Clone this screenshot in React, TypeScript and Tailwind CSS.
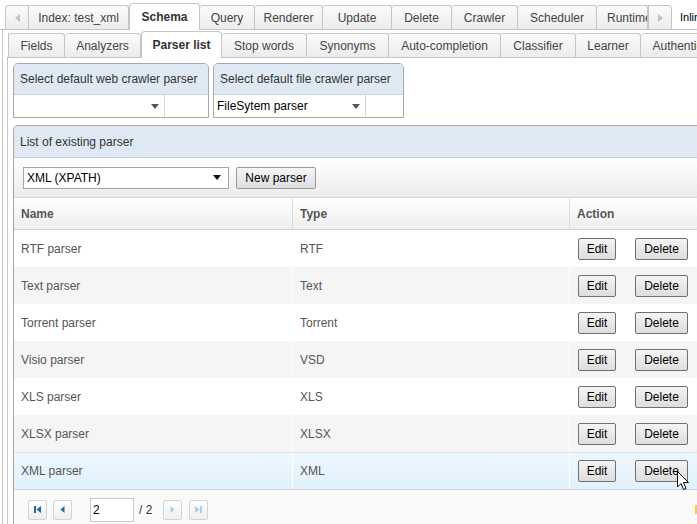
import React from "react";

const topTabs = [
  { label: "Index: test_xml", w: "w-[100px]" },
  { label: "Schema", w: "w-[71px]", active: true },
  { label: "Query", w: "w-[55px]" },
  { label: "Renderer", w: "w-[68px]" },
  { label: "Update", w: "w-[69px]" },
  { label: "Delete", w: "w-[60px]" },
  { label: "Crawler", w: "w-[66px]" },
  { label: "Scheduler", w: "w-[79px]" },
  { label: "Runtime", w: "w-[51px]", clip: true },
];

const subTabs = [
  { label: "Fields", w: "w-[56px]" },
  { label: "Analyzers", w: "w-[76px]" },
  { label: "Parser list", w: "w-[81px]", active: true },
  { label: "Stop words", w: "w-[85px]" },
  { label: "Synonyms", w: "w-[82px]" },
  { label: "Auto-completion", w: "w-[112px]" },
  { label: "Classifier", w: "w-[75px]" },
  { label: "Learner", w: "w-[65px]" },
  { label: "Authentication", w: "w-[100px]" },
];

const parsers = [
  { name: "RTF parser", type: "RTF" },
  { name: "Text parser", type: "Text" },
  { name: "Torrent parser", type: "Torrent" },
  { name: "Visio parser", type: "VSD" },
  { name: "XLS parser", type: "XLS" },
  { name: "XLSX parser", type: "XLSX" },
  { name: "XML parser", type: "XML" },
];

const Caret = ({ color = "#555" }: { color?: string }) => (
  <svg width="8" height="5" viewBox="0 0 8 5">
    <path d="M0 0 L8 0 L4 5 Z" fill={color} />
  </svg>
);

const Tab = ({
  label,
  w,
  active,
  clip,
}: {
  label: string;
  w: string;
  active?: boolean;
  clip?: boolean;
}) =>
  active ? (
    <div
      className={`${w} shrink-0 h-[27px] -mb-px flex items-center justify-center border border-b-0 border-[#c5c5c5] rounded-t-[4px] bg-white font-bold text-[#333] whitespace-nowrap overflow-hidden`}
    >
      {label}
    </div>
  ) : (
    <div
      className={`${w} shrink-0 h-[24px] flex items-center ${clip ? "justify-start pl-[10px]" : "justify-center"} border border-b-0 border-l-0 border-[#c5c5c5] rounded-t-[3px] bg-linear-to-b from-[#fbfbfb] to-[#ececec] text-[#444] whitespace-nowrap overflow-hidden`}
    >
      {label}
    </div>
  );

const WinButton = ({ children, w }: { children: React.ReactNode; w: string }) => (
  <div
    className={`${w} h-[22px] flex items-center justify-center border border-[#707070] rounded-[2px] bg-linear-to-b from-[#f4f4f4] to-[#dddddd] text-black`}
  >
    {children}
  </div>
);

const PagerButton = ({ kind, disabled }: { kind: "first" | "prev" | "next" | "last"; disabled?: boolean }) => {
  const c = disabled ? "#a9d0ea" : "#1a6aa3";
  return (
    <div className="w-[19px] h-[20px] flex items-center justify-center border border-[#d4d4d4] rounded-[2px] bg-linear-to-b from-white to-[#eeeeee]">
      <svg width="9" height="9" viewBox="0 0 9 9">
        {kind === "first" && (
          <>
            <rect x="1" y="1" width="2" height="7" fill={c} />
            <path d="M8 1 L3.5 4.5 L8 8 Z" fill={c} />
          </>
        )}
        {kind === "prev" && <path d="M6.5 1 L2.5 4.5 L6.5 8 Z" fill={c} />}
        {kind === "next" && <path d="M2.5 1 L6.5 4.5 L2.5 8 Z" fill={c} />}
        {kind === "last" && (
          <>
            <path d="M1 1 L5.5 4.5 L1 8 Z" fill={c} />
            <rect x="6" y="1" width="2" height="7" fill={c} />
          </>
        )}
      </svg>
    </div>
  );
};

const SelectBox = ({ title, value, w, selW }: { title: string; value: string; w: string; selW: string }) => (
  <div className={`${w} border border-[#a9a9a9] rounded-t-[5px] overflow-hidden`}>
    <div className="h-[31px] flex items-center px-[6px] bg-[#dfe9f3] border-b border-[#c8d3de] text-[#333] whitespace-nowrap">
      {title}
    </div>
    <div className="flex h-[22px]">
      <div className={`${selW} h-full flex items-center justify-between pl-[3px] pr-[5px] bg-white border-r border-[#d6d6d6] text-black`}>
        <span>{value}</span>
        <Caret />
      </div>
      <div className="flex-1 bg-white" />
    </div>
  </div>
);

export default function App() {
  return (
    <div className="relative w-[697px] h-[524px] overflow-hidden bg-white text-[12px] font-['Liberation_Sans',Arial,sans-serif]">
      {/* main tabs */}
      <div className="flex items-end h-[30px] pl-[5px] border-b border-[#c5c5c5]">
        <div className="w-[24px] shrink-0 h-[24px] flex items-center justify-center border border-b-0 border-[#c5c5c5] rounded-tl-[4px] bg-linear-to-b from-[#fbfbfb] to-[#ececec]">
          <svg width="5" height="8" viewBox="0 0 5 8">
            <path d="M5 0 L0 4 L5 8 Z" fill="#c2c2c2" />
          </svg>
        </div>
        {topTabs.map((t) => (
          <Tab key={t.label} {...t} />
        ))}
        <div className="w-[24px] shrink-0 h-[24px] flex items-center justify-center border border-b-0 border-[#c5c5c5] rounded-tr-[4px] bg-linear-to-b from-[#fbfbfb] to-[#ececec]">
          <svg width="5" height="8" viewBox="0 0 5 8">
            <path d="M0 0 L5 4 L0 8 Z" fill="#c2c2c2" />
          </svg>
        </div>
        <div className="ml-[8px] shrink-0 h-[24px] flex items-center text-[11px] text-black whitespace-nowrap">Inline</div>
      </div>

      {/* schema panel */}
      <div className="ml-[2px] border-l border-[#c5c5c5] pl-[4px] pt-[3px]">
        <div className="flex items-end h-[25px] border-b border-[#c5c5c5] pl-px">
          <div className="w-0 h-[24px] border-l border-[#c5c5c5] shrink-0" />
          {subTabs.map((t) => (
            <Tab key={t.label} {...t} />
          ))}
        </div>

        {/* parser list panel */}
        <div className="border-l border-[#c5c5c5] pl-[5px] pt-[5px]">
          <div className="flex gap-[4px]">
            <SelectBox title="Select default web crawler parser" value="" w="w-[196px]" selW="w-[151px]" />
            <SelectBox title="Select default file crawler parser" value="FileSytem parser" w="w-[191px]" selW="w-[152px]" />
          </div>

          <div className="mt-[7px] w-[720px] border-l border-t border-[#a9a9a9] rounded-tl-[5px] overflow-hidden">
            <div className="h-[32px] flex items-center px-[6px] bg-[#dfe9f3] border-b border-[#c3ccd6] text-[#333]">
              List of existing parser
            </div>
            <div className="h-[40px] flex items-center pl-[9px] gap-[7px] bg-linear-to-b from-white to-[#ebebeb] border-b border-[#d9d9d9]">
              <div className="w-[206px] h-[22px] flex items-center justify-between pl-[3px] pr-[7px] bg-white border border-[#a6a6a6] text-black">
                <span>XML (XPATH)</span>
                <Caret color="#111" />
              </div>
              <div className="w-[80px] h-[22px] flex items-center justify-center border border-[#9a9a9a] rounded-[2px] bg-linear-to-b from-[#f6f6f6] to-[#dedede] text-black">
                New parser
              </div>
            </div>

            <div className="flex h-[32px] bg-linear-to-b from-white to-[#eeeeee] border-b border-[#d4d4d4] font-bold text-[#555]">
              <div className="w-[279px] flex items-center px-[7px] border-r border-[#dcdcdc]">Name</div>
              <div className="w-[277px] flex items-center px-[7px] border-r border-[#dcdcdc]">Type</div>
              <div className="flex-1 flex items-center px-[7px]">Action</div>
            </div>

            {parsers.map((p, i) => {
              const hover = i === parsers.length - 1;
              const bg = hover
                ? "bg-linear-to-b from-[#eef7fe] to-[#e0f1fd] border-t border-[#cfe6f8]"
                : i % 2 === 1
                ? "bg-[#f5f5f5]"
                : "bg-white";
              return (
                <div key={p.name} className={`flex h-[37px] text-[#555] ${bg}`}>
                  <div className="w-[279px] flex items-center px-[7px] border-r border-white">{p.name}</div>
                  <div className="w-[277px] flex items-center px-[7px] border-r border-white">{p.type}</div>
                  <div className="flex-1 flex items-center pl-[8px] gap-[19px]">
                    <WinButton w="w-[38px]">Edit</WinButton>
                    <WinButton w="w-[53px]">Delete</WinButton>
                  </div>
                </div>
              );
            })}

            <div className="h-[40px] flex items-center pl-[14px] bg-[#fafafa] border-t border-[#c9d4de] text-[#333]">
              <PagerButton kind="first" />
              <div className="ml-[6px]">
                <PagerButton kind="prev" />
              </div>
              <div className="ml-[18px] w-[44px] h-[24px] flex items-center pl-[2px] bg-white border border-[#c9c9c9] text-black">2</div>
              <span className="ml-[5px] mr-[11px]">/ 2</span>
              <PagerButton kind="next" disabled />
              <div className="ml-[7px]">
                <PagerButton kind="last" disabled />
              </div>
            </div>
          </div>
        </div>
      </div>

      {/* mouse cursor */}
      <svg className="absolute left-[677px] top-[471px]" width="13" height="20" viewBox="0 0 13 20">
        <path d="M0.5 0.5 L0.5 16 L4 12.5 L6.5 18.5 L9 17.5 L6.5 11.5 L11.5 11.5 Z" fill="white" stroke="black" strokeWidth="1" />
      </svg>
      <div className="absolute right-0 top-[505px] w-[2px] h-[9px] bg-[#f7c766]" />
    </div>
  );
}
